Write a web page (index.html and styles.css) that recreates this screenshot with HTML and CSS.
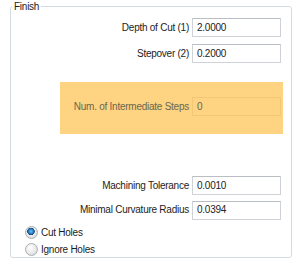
FILE: index.html
```html
<!DOCTYPE html>
<html lang="en">
  <head>
    <meta charset="UTF-8" />
    <title>Finish</title>
    <link rel="stylesheet" href="styles.css">
  </head>
  <body>
    <fieldset class="group">
      <legend>Finish</legend>

      <div class="row first">
        <label for="depth">Depth of Cut (1)</label>
        <input id="depth" type="text" value="2.0000" />
      </div>
      <div class="row">
        <label for="stepover">Stepover (2)</label>
        <input id="stepover" type="text" value="0.2000" />
      </div>

      <div class="highlight">
        <div class="row disabled">
          <label for="steps">Num. of Intermediate Steps</label>
          <input id="steps" type="text" value="0" disabled />
        </div>
      </div>

      <div class="row spaced">
        <label for="tolerance">Machining Tolerance</label>
        <input id="tolerance" type="text" value="0.0010" />
      </div>
      <div class="row raised">
        <label for="radius">Minimal Curvature Radius</label>
        <input id="radius" type="text" value="0.0394" />
      </div>

      <div class="options">
        <label class="radio"><input type="radio" name="holes" checked /> Cut Holes</label>
        <label class="radio"><input type="radio" name="holes" /> Ignore Holes</label>
      </div>
    </fieldset>
  </body>
</html>
```

FILE: styles.css
```css
* {
  margin: 0;
  padding: 0;
  box-sizing: border-box;
}

body {
  background: #fff;
  font-family: "Liberation Sans", Arial, sans-serif;
  font-size: 10px;
  letter-spacing: -0.25px;
  color: #1c1c1c;
}

.group {
  width: 282px;
  height: 258px;
  margin-left: 10px;
  border: 1px solid #d3dbe2;
  border-radius: 3px;
  padding: 0 10px 0 0;
}

.group legend {
  margin-left: 1px;
  padding: 0 2px;
  line-height: 13px;
  color: #222;
}

.row {
  display: flex;
  justify-content: flex-end;
  align-items: center;
  gap: 3px;
  height: 19px;
  margin-top: 7px;
  white-space: nowrap;
}

.row.first {
  margin-top: 5px;
}

.row.spaced {
  margin-top: 42px;
}

.row.raised {
  margin-top: 6px;
}

.row.raised label,
.row.raised input {
  padding-bottom: 3px;
}

.row input {
  width: 89px;
  height: 19px;
  border: 1px solid #cfd3d8;
  border-top-color: #b9bec4;
  background: #fff;
  padding: 0 4px;
  font: inherit;
  letter-spacing: inherit;
  color: #222;
}

.highlight {
  margin: 19px -2px 0 49px;
  padding: 15px 2px 18px 0;
  background: #fed381;
}

.highlight .row {
  margin-top: 0;
}

.row.disabled label {
  color: #6b6650;
}

.row.disabled input {
  background: #fed381;
  border-color: #f2c877;
  color: #6b6650;
}

.options {
  display: flex;
  flex-direction: column;
  gap: 3px;
  margin: 5px 0 0 14px;
}

.radio {
  display: flex;
  align-items: center;
  gap: 3px;
  height: 14px;
}

.radio input {
  appearance: none;
  width: 13px;
  height: 13px;
  border-radius: 50%;
  border: 1px solid #a9b0b7;
  background: radial-gradient(circle at 40% 35%, #fff 0, #e8e8e8 55%, #cfcfcf 100%);
}

.radio input:checked {
  background:
    radial-gradient(circle at 45% 40%, #6fc0f2 0, #1f79c4 2.5px, #16456e 3.5px, transparent 4px),
    radial-gradient(circle at 40% 35%, #fff 0, #e8e8e8 55%, #cfcfcf 100%);
}
```
